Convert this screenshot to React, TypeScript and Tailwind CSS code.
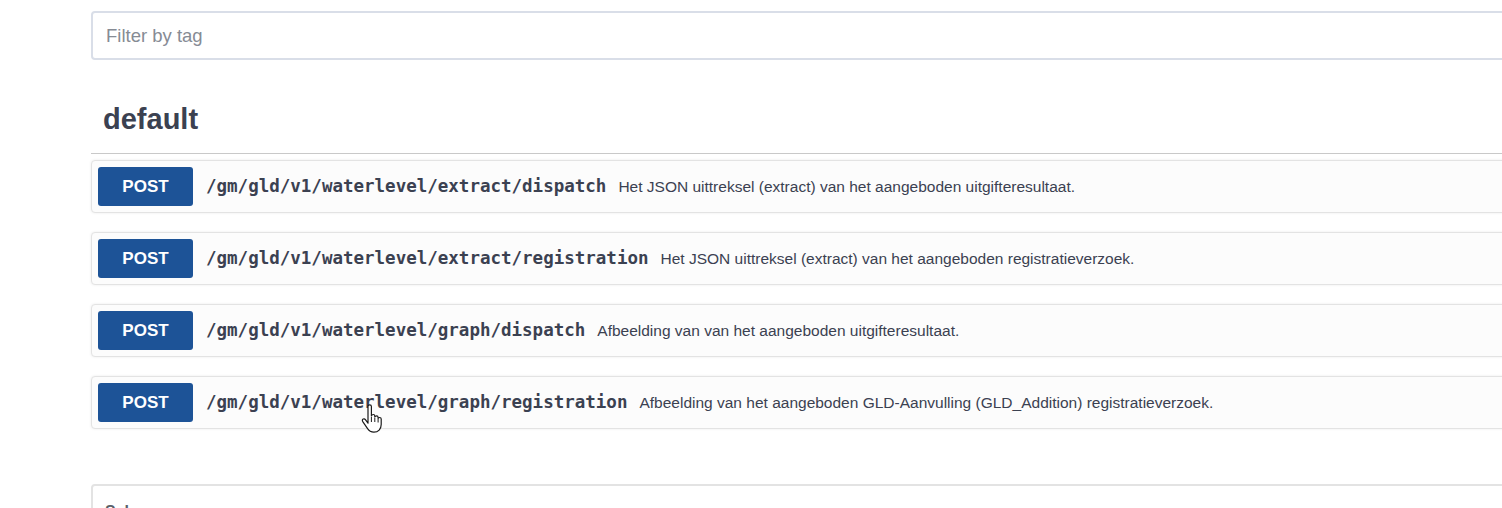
import React from "react";

type Op = {
  method: string;
  path: string;
  summary: string;
};

const OPS: Op[] = [
  {
    method: "POST",
    path: "/gm/gld/v1/waterlevel/extract/dispatch",
    summary: "Het JSON uittreksel (extract) van het aangeboden uitgifteresultaat.",
  },
  {
    method: "POST",
    path: "/gm/gld/v1/waterlevel/extract/registration",
    summary: "Het JSON uittreksel (extract) van het aangeboden registratieverzoek.",
  },
  {
    method: "POST",
    path: "/gm/gld/v1/waterlevel/graph/dispatch",
    summary: "Afbeelding van van het aangeboden uitgifteresultaat.",
  },
  {
    method: "POST",
    path: "/gm/gld/v1/waterlevel/graph/registration",
    summary: "Afbeelding van het aangeboden GLD-Aanvulling (GLD_Addition) registratieverzoek.",
  },
];

function HandCursor() {
  return (
    <svg width="22" height="30" viewBox="0 0 22 30" className="absolute left-[269px] top-[27px]">
      <path
        d="M7 2.5c0-1 .8-1.7 1.7-1.7s1.7.7 1.7 1.7V12c.3-1 1-1.5 1.8-1.5s1.6.7 1.6 1.6v1c.3-.8 1-1.2 1.7-1.2.9 0 1.6.7 1.6 1.6v1c.3-.6.9-1 1.5-1 .9 0 1.6.7 1.6 1.6v5.5c0 4.5-3 7.6-7.3 7.6-3.3 0-5-1.4-6.5-3.8L1.6 17.3c-.5-.9-.2-1.9.6-2.3.8-.4 1.7-.1 2.2.6L7 19.2V2.5z"
        fill="#fff"
        stroke="#1a1a1a"
        strokeWidth="1.2"
        strokeLinejoin="round"
      />
      <path d="M10.4 13v5M13.8 14v4M17.1 15v3.5" stroke="#1a1a1a" strokeWidth="1" />
    </svg>
  );
}

function OpRow({ op, cursor }: { op: Op; cursor?: boolean }) {
  return (
    <div className="relative flex items-center h-[53px] px-[6px] bg-[#fcfcfc] border border-[#e3e3e3] rounded-[4px] shadow-[0_0_3px_rgba(0,0,0,0.08)]">
      <span className="flex items-center justify-center w-[95px] h-[39px] rounded-[3px] bg-[#1d5397] text-white text-[17px] font-bold font-['Liberation_Sans',Arial,sans-serif]">
        {op.method}
      </span>
      <span className="ml-[13px] text-[17.5px] font-bold text-[#3b4151] font-['DejaVu_Sans_Mono','Liberation_Mono',monospace]">
        {op.path}
      </span>
      <span className="ml-[12px] text-[15.5px] text-[#3b4151] font-['Liberation_Sans',Arial,sans-serif]">
        {op.summary}
      </span>
      {cursor && <HandCursor />}
    </div>
  );
}

export default function App() {
  return (
    <div className="w-[1502px] h-[508px] overflow-hidden bg-white font-['Liberation_Sans',Arial,sans-serif]">
      <div className="pl-[91px] pt-[11px] w-[1560px]">
        <div className="h-[49px] border-2 border-[#d9dee8] rounded-[4px] flex items-center px-[13px] text-[18.5px] text-[#868b94]">
          Filter by tag
        </div>

        <div className="mt-[45px] px-[12px] h-[48px] text-[29px] font-bold text-[#3b4151] flex items-start leading-none">
          default
        </div>
        <div className="border-t border-[#c9c9c9]" />

        <div className="mt-[6px] flex flex-col gap-[19px]">
          {OPS.map((op, i) => (
            <OpRow key={op.path} op={op} cursor={i === 3} />
          ))}
        </div>

        <div className="mt-[55px] h-[60px] border-2 border-[#e3e3e3] rounded-[4px] px-[12px] pt-[14px] text-[16px] font-bold text-[#5a5f69]">
          Schemes
        </div>
      </div>
    </div>
  );
}
